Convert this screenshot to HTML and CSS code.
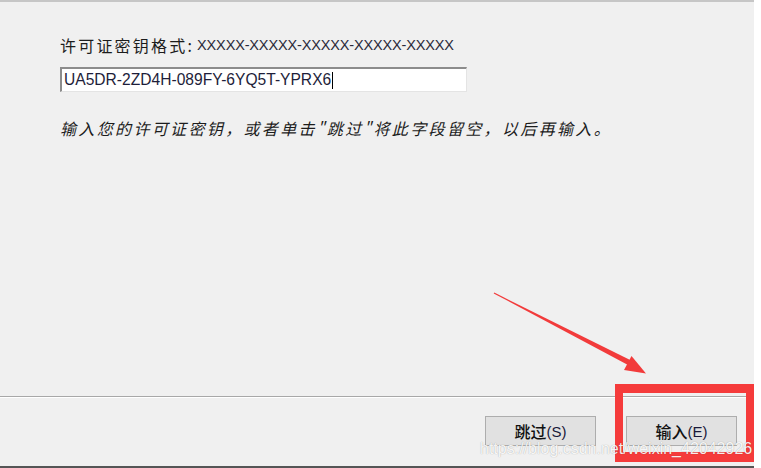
FILE: index.html
```html
<!DOCTYPE html>
<html lang="zh-CN">
<head>
<meta charset="utf-8">
<title>许可证密钥</title>
<link rel="stylesheet" href="styles.css">
</head>
<body>
<div class="page">
  <div class="panel">
    <div class="content">
      <div class="label"><span class="label-cjk">许可证密钥格式:</span><span class="label-fmt">XXXXX-XXXXX-XXXXX-XXXXX-XXXXX</span></div>
      <div class="keybox"><span class="keytext">UA5DR-2ZD4H-089FY-6YQ5T-YPRX6</span><span class="caret"></span></div>
      <div class="hint">输入您的许可证密钥，或者单击"跳过"将此字段留空，以后再输入。</div>
    </div>
    <div class="footer">
      <div class="btn">跳过<span class="acc">(S)</span></div>
      <div class="btn">输入<span class="acc">(E)</span></div>
    </div>
  </div>
  <div class="bottom-strip"></div>

  <svg class="arrow" width="761" height="468" viewBox="0 0 761 468">
    <polygon points="494.3,292.6 633.2,361.6 630.8,366.4 493.7,293.4" fill="#f23b3b"/>
    <polygon points="631.5,356 646,373.5 624,370" fill="#f23b3b"/>
  </svg>
  <div class="highlight"></div>
  <div class="watermark">https://blog.csdn.net/weixin_42042926</div>
</div>
</body>
</html>
```

FILE: styles.css
```css
html, body {
  margin: 0;
  padding: 0;
  background: #ffffff;
}

.page {
  position: relative;
  width: 761px;
  height: 468px;
  overflow: hidden;
  font-family: "Noto Sans CJK SC", "Liberation Sans", sans-serif;
}

.panel {
  width: 754px;
  height: 464px;
  background: #f0f0f0;
  border-top: 2px solid #c6c6c6;
  display: flex;
  flex-direction: column;
}

.content {
  flex: 1;
  padding: 33px 0 0 60px;
  display: flex;
  flex-direction: column;
  align-items: flex-start;
}

.label {
  height: 20px;
  line-height: 20px;
  display: flex;
  align-items: center;
  color: #1c1c1c;
}

.label-cjk {
  font-size: 16px;
  letter-spacing: 2.2px;
}

.label-fmt {
  font-family: "Liberation Sans", sans-serif;
  font-size: 14.5px;
  letter-spacing: -0.15px;
  color: #2a2a3a;
  margin-left: 3px;
}

.keybox {
  margin-top: 12px;
  width: 407px;
  height: 25px;
  background: #ffffff;
  border-top: 2px solid #8c8c8c;
  border-left: 2px solid #8c8c8c;
  border-right: 1px solid #e4e4e4;
  border-bottom: 1px solid #e4e4e4;
  display: flex;
  align-items: center;
  padding-left: 2px;
  box-sizing: border-box;
}

.keytext {
  font-family: "Liberation Sans", sans-serif;
  font-size: 15.6px;
  color: #1e1e3a;
}

.caret {
  display: inline-block;
  width: 1px;
  height: 17px;
  background: #000;
  margin-left: 1px;
}

.hint {
  margin-top: 26px;
  height: 20px;
  line-height: 20px;
  font-size: 16px;
  font-style: italic;
  letter-spacing: 2.35px;
  color: #1c1c1c;
}

.footer {
  height: 70px;
  border-top: 1px solid #a8a8a8;
  box-shadow: inset 0 1px 0 #ffffff;
  display: flex;
  justify-content: flex-end;
  align-items: flex-start;
  gap: 30px;
  padding: 19px 17px 0 0;
  box-sizing: border-box;
}

.btn {
  width: 111px;
  height: 30px;
  box-sizing: border-box;
  background: #e1e1e1;
  border: 1px solid #adadad;
  display: flex;
  align-items: center;
  justify-content: center;
  font-size: 16px;
  font-weight: 500;
  color: #111;
}

.acc {
  font-family: "Liberation Sans", sans-serif;
  font-size: 15px;
  color: #1a1a3a;
}

.bottom-strip {
  width: 754px;
  height: 2px;
  background: #555555;
}

.arrow {
  position: absolute;
  left: 0;
  top: 0;
}

.highlight {
  position: absolute;
  left: 615px;
  top: 384px;
  width: 139px;
  height: 78px;
  box-sizing: border-box;
  border-style: solid;
  border-color: #f53b3b;
  border-width: 9px 8px 10px 8px;
}

.watermark {
  position: absolute;
  left: 480px;
  top: 440px;
  font-family: "Liberation Sans", sans-serif;
  font-size: 16px;
  line-height: 18px;
  color: rgba(255, 255, 255, 0.92);
  text-shadow: 0 0 1px rgba(0, 0, 0, 0.35);
  white-space: nowrap;
}
```
